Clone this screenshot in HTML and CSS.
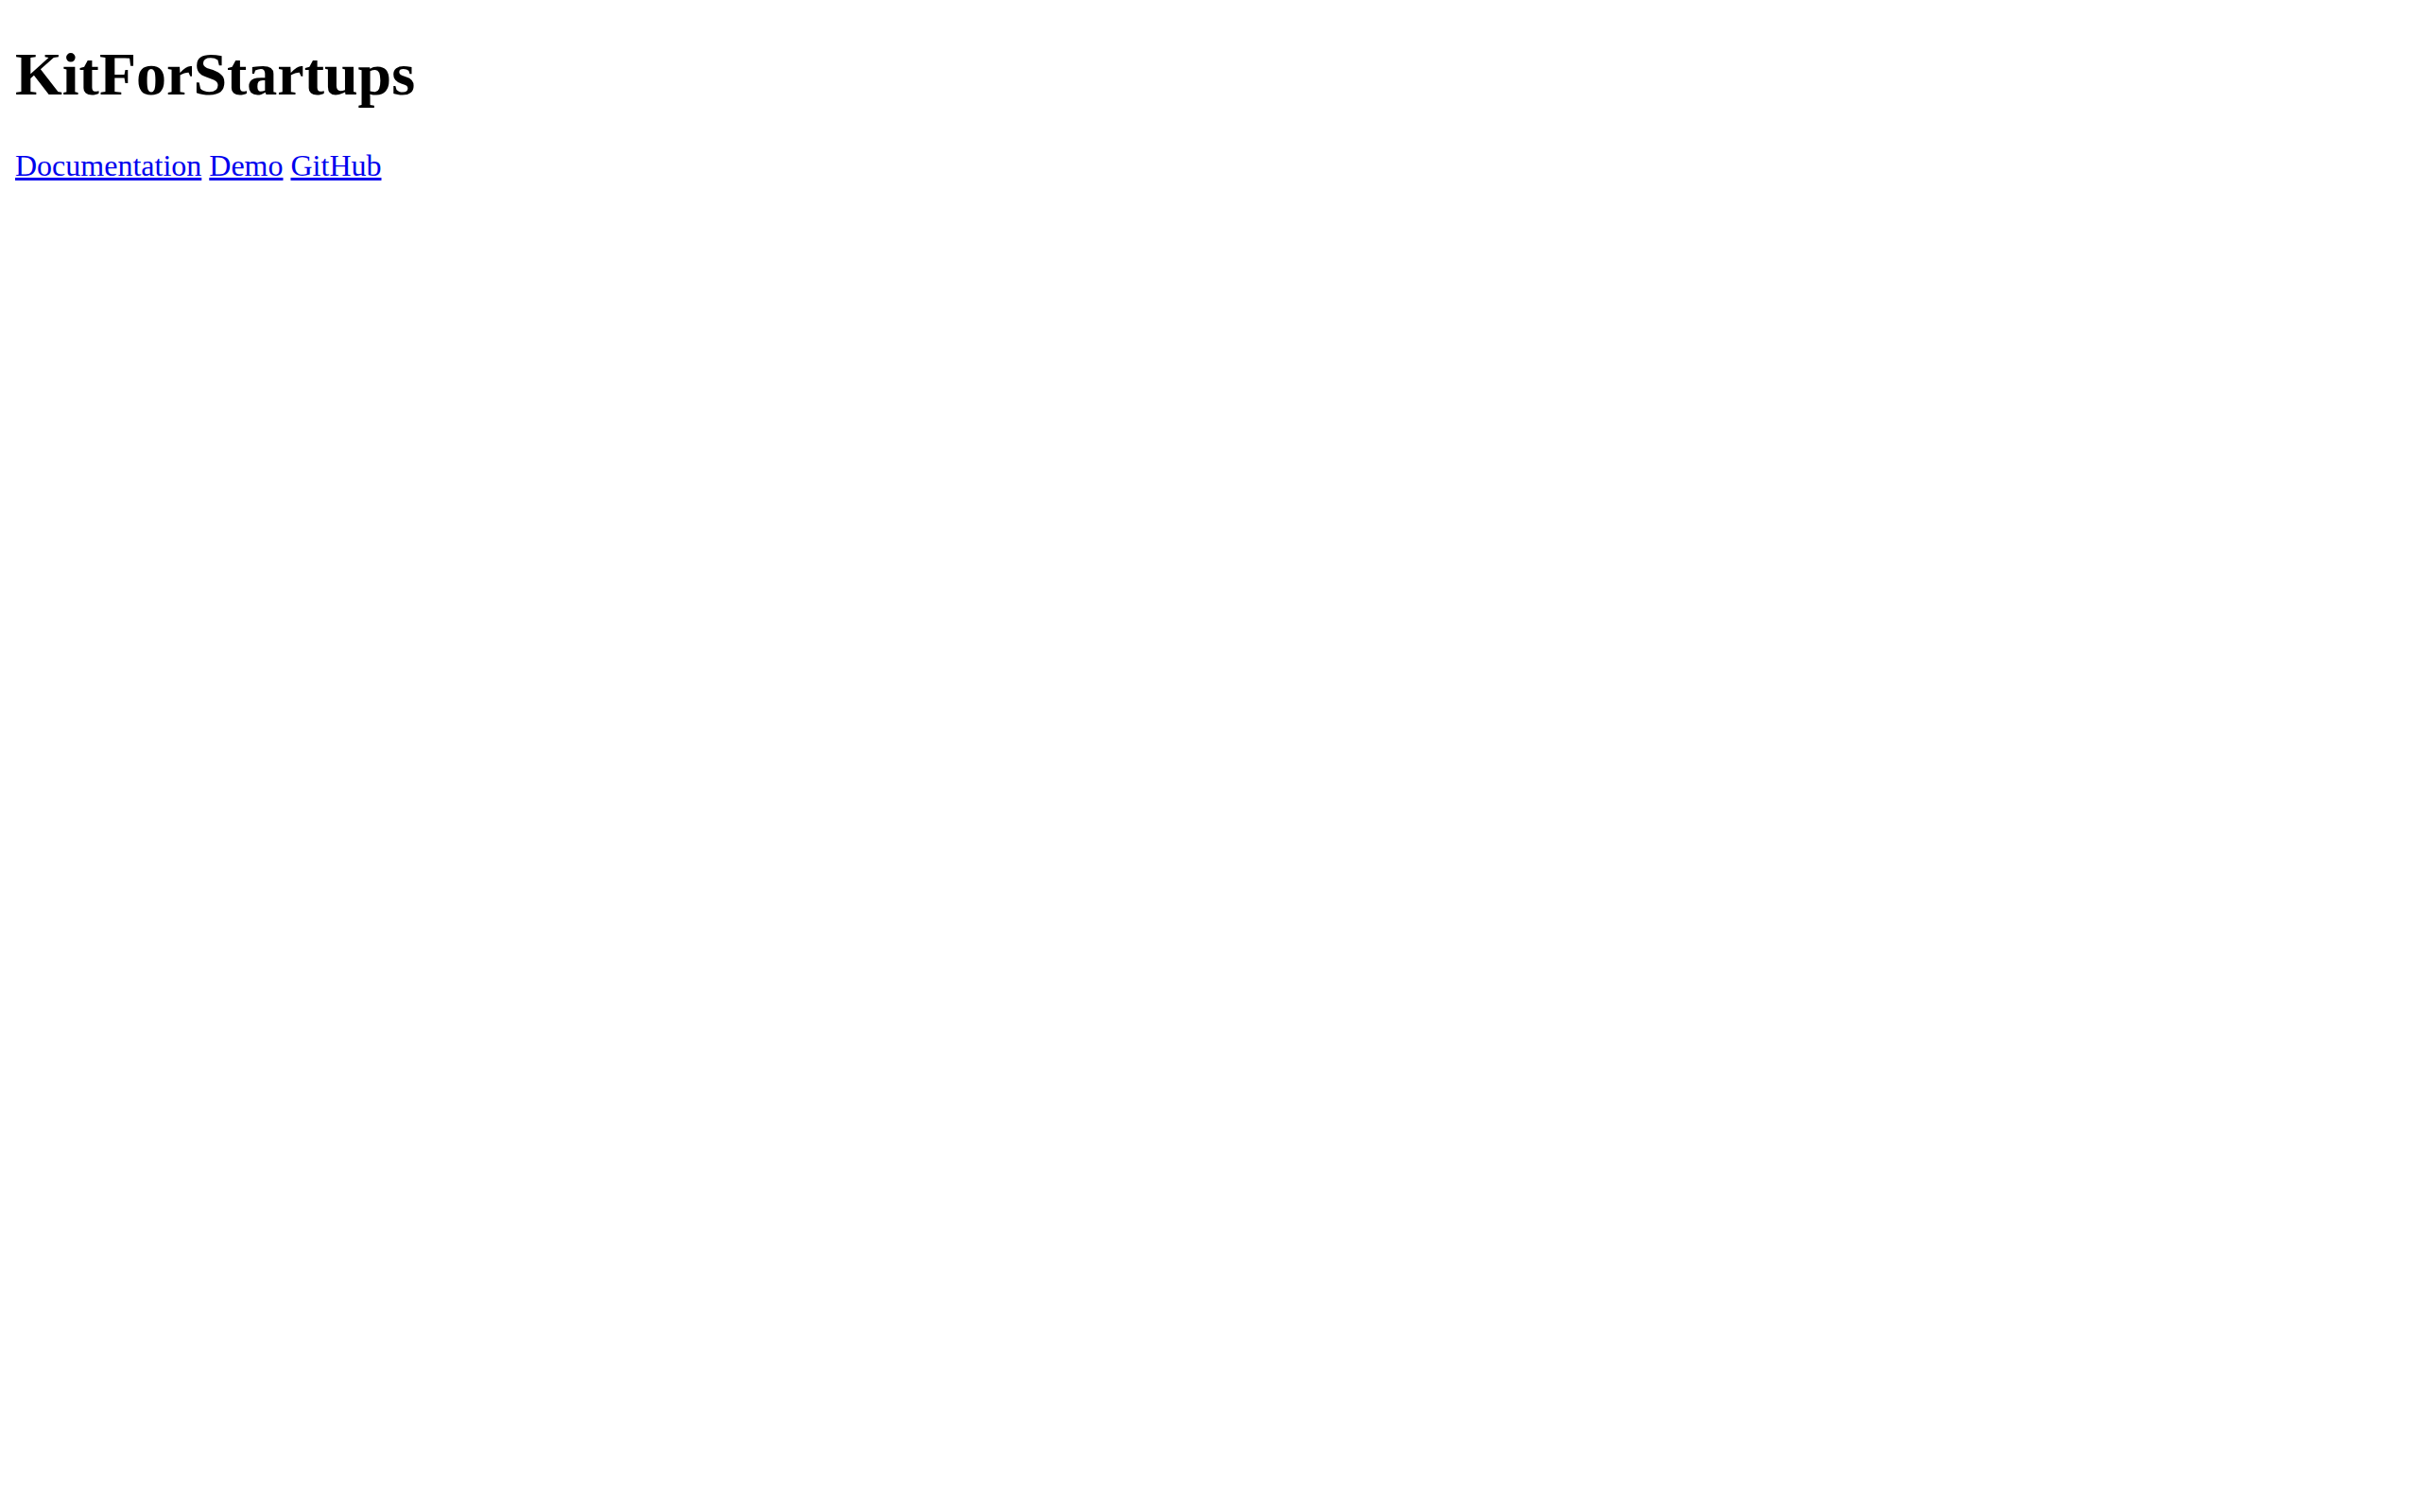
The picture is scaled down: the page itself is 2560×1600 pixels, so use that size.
FILE: index.html
```
<!DOCTYPE html>
<html lang="en">
<head>
    <meta charset="UTF-8">
    <meta name="viewport" content="width=device-width, initial-scale=1.0">
    <title>KitForStartups</title>
    <link rel="stylesheet" href="styles.css">
</head>
<body>
    <h1 class="title">KitForStartups</h1>
    <nav class="links">
        <a href="/docs">Documentation</a>
        <a href="/demo">Demo</a>
        <a href="https://github.com">GitHub</a>
    </nav>
</body>
</html>
```

FILE: styles.css
```
body {
    margin: 0;
    padding: 42px 16px 16px;
    font-family: "Liberation Serif", "Times New Roman", serif;
    font-size: 32px;
    line-height: 36px;
    color: #000;
    background-color: #fff;
}
.title {
    margin: 0 0 41px;
    font-size: 64px;
    line-height: 74px;
}
.links a {
    color: #0000ee;
}
```
